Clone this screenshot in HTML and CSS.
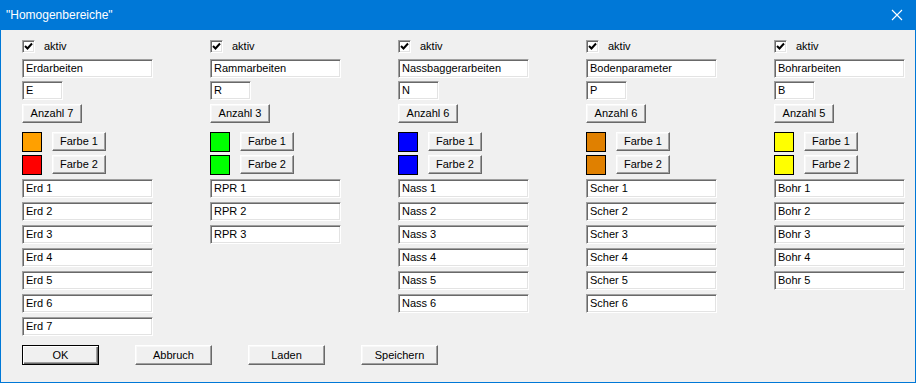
FILE: index.html
```html
<!DOCTYPE html>
<html lang="de">
<head>
    <meta charset="UTF-8">
    <title>Homogenbereiche</title>
    <link rel="stylesheet" href="styles.css">
</head>
<body>
<div class="window">
    <!-- Titelleiste -->
    <div class="titlebar">
        <span class="title">"Homogenbereiche"</span>
        <svg class="close" width="12" height="12" viewBox="0 0 12 12">
            <path d="M1 1 L11 11 M11 1 L1 11" stroke="#fff" stroke-width="1.1" fill="none"/>
        </svg>
    </div>

    <div class="content">
        <div class="columns">
            <!-- Spalte 1 -->
            <div class="col">
                <div class="check"><span class="box"><svg width="9" height="9" viewBox="0 0 9 9"><path d="M1 4 L3.5 6.5 L8 1.5" stroke="#000" stroke-width="2" fill="none"/></svg></span>aktiv</div>
                <div class="field name">Erdarbeiten</div>
                <div class="field abbr">E</div>
                <div class="btn count">Anzahl 7</div>
                <div class="color-row first"><span class="swatch" style="background:#ffa000"></span><span class="btn farbe">Farbe 1</span></div>
                <div class="color-row"><span class="swatch" style="background:#ff0000"></span><span class="btn farbe">Farbe 2</span></div>
                <div class="list">
                    <div class="field">Erd 1</div>
                    <div class="field">Erd 2</div>
                    <div class="field">Erd 3</div>
                    <div class="field">Erd 4</div>
                    <div class="field">Erd 5</div>
                    <div class="field">Erd 6</div>
                    <div class="field">Erd 7</div>
                </div>
            </div>
            <!-- Spalte 2 -->
            <div class="col">
                <div class="check"><span class="box"><svg width="9" height="9" viewBox="0 0 9 9"><path d="M1 4 L3.5 6.5 L8 1.5" stroke="#000" stroke-width="2" fill="none"/></svg></span>aktiv</div>
                <div class="field name">Rammarbeiten</div>
                <div class="field abbr">R</div>
                <div class="btn count">Anzahl 3</div>
                <div class="color-row first"><span class="swatch" style="background:#00ff00"></span><span class="btn farbe">Farbe 1</span></div>
                <div class="color-row"><span class="swatch" style="background:#00ff00"></span><span class="btn farbe">Farbe 2</span></div>
                <div class="list">
                    <div class="field">RPR 1</div>
                    <div class="field">RPR 2</div>
                    <div class="field">RPR 3</div>
                </div>
            </div>
            <!-- Spalte 3 -->
            <div class="col">
                <div class="check"><span class="box"><svg width="9" height="9" viewBox="0 0 9 9"><path d="M1 4 L3.5 6.5 L8 1.5" stroke="#000" stroke-width="2" fill="none"/></svg></span>aktiv</div>
                <div class="field name">Nassbaggerarbeiten</div>
                <div class="field abbr">N</div>
                <div class="btn count">Anzahl 6</div>
                <div class="color-row first"><span class="swatch" style="background:#0000ff"></span><span class="btn farbe">Farbe 1</span></div>
                <div class="color-row"><span class="swatch" style="background:#0000ff"></span><span class="btn farbe">Farbe 2</span></div>
                <div class="list">
                    <div class="field">Nass 1</div>
                    <div class="field">Nass 2</div>
                    <div class="field">Nass 3</div>
                    <div class="field">Nass 4</div>
                    <div class="field">Nass 5</div>
                    <div class="field">Nass 6</div>
                </div>
            </div>
            <!-- Spalte 4 -->
            <div class="col">
                <div class="check"><span class="box"><svg width="9" height="9" viewBox="0 0 9 9"><path d="M1 4 L3.5 6.5 L8 1.5" stroke="#000" stroke-width="2" fill="none"/></svg></span>aktiv</div>
                <div class="field name">Bodenparameter</div>
                <div class="field abbr">P</div>
                <div class="btn count">Anzahl 6</div>
                <div class="color-row first"><span class="swatch" style="background:#e08000"></span><span class="btn farbe">Farbe 1</span></div>
                <div class="color-row"><span class="swatch" style="background:#e08000"></span><span class="btn farbe">Farbe 2</span></div>
                <div class="list">
                    <div class="field">Scher 1</div>
                    <div class="field">Scher 2</div>
                    <div class="field">Scher 3</div>
                    <div class="field">Scher 4</div>
                    <div class="field">Scher 5</div>
                    <div class="field">Scher 6</div>
                </div>
            </div>
            <!-- Spalte 5 -->
            <div class="col">
                <div class="check"><span class="box"><svg width="9" height="9" viewBox="0 0 9 9"><path d="M1 4 L3.5 6.5 L8 1.5" stroke="#000" stroke-width="2" fill="none"/></svg></span>aktiv</div>
                <div class="field name">Bohrarbeiten</div>
                <div class="field abbr">B</div>
                <div class="btn count">Anzahl 5</div>
                <div class="color-row first"><span class="swatch" style="background:#ffff00"></span><span class="btn farbe">Farbe 1</span></div>
                <div class="color-row"><span class="swatch" style="background:#ffff00"></span><span class="btn farbe">Farbe 2</span></div>
                <div class="list">
                    <div class="field">Bohr 1</div>
                    <div class="field">Bohr 2</div>
                    <div class="field">Bohr 3</div>
                    <div class="field">Bohr 4</div>
                    <div class="field">Bohr 5</div>
                </div>
            </div>
        </div>

        <!-- Schaltflaechen unten -->
        <div class="actions">
            <div class="btn action default">OK</div>
            <div class="btn action">Abbruch</div>
            <div class="btn action">Laden</div>
            <div class="btn action">Speichern</div>
        </div>
    </div>
</div>
</body>
</html>
```

FILE: styles.css
```css
*{
    margin: 0;
    padding: 0;
    box-sizing: border-box;
}
body{
    background: #f0f0f0;
    font-family: "Liberation Sans", Arial, sans-serif;
    font-size: 11px;
    color: #000;
}
.window{
    width: 916px;
    height: 383px;
    border: 1px solid #0078d7;
    border-top: none;
    background: #f0f0f0;
}
/*Titelleiste*/
.titlebar{
    height: 30px;
    margin: 0 -1px;
    background: #0078d7;
    color: #fff;
    display: flex;
    align-items: center;
    justify-content: space-between;
    padding: 0 13px 0 6px;
}
.titlebar .title{
    font-size: 12px;
}
/*Inhalt*/
.content{
    padding: 10px 0 0 21px;
}
.columns{
    display: flex;
    gap: 57px;
    height: 296px;
}
.col{
    width: 131px;
    display: flex;
    flex-direction: column;
}
.check{
    height: 13px;
    display: flex;
    align-items: center;
    gap: 9px;
    line-height: 13px;
}
.check .box{
    width: 13px;
    height: 13px;
    background: #fff;
    border: 1px solid;
    border-color: #a0a0a0 #fff #fff #a0a0a0;
    box-shadow: inset 1px 1px #696969, inset -1px -1px #e3e3e3;
    display: flex;
    align-items: center;
    justify-content: center;
}
/*Eingabefelder*/
.field{
    height: 19px;
    background: #fff;
    border: 1px solid;
    border-color: #a0a0a0 #fff #fff #a0a0a0;
    box-shadow: inset 1px 1px #696969, inset -1px -1px #e3e3e3;
    padding: 0 2px 0 3px;
    line-height: 17px;
    white-space: nowrap;
    overflow: hidden;
}
.field.name{
    margin-top: 6px;
}
.field.abbr{
    width: 41px;
    margin-top: 3px;
}
/*Schaltflaechen*/
.btn{
    height: 19px;
    background: #f0f0f0;
    border: 1px solid;
    border-color: #fff #696969 #696969 #fff;
    box-shadow: inset -1px -1px #a0a0a0, inset 1px 1px #f8f8f8;
    text-align: center;
    line-height: 17px;
    white-space: nowrap;
}
.btn.count{
    width: 60px;
    margin-top: 4px;
}
.color-row{
    display: flex;
    gap: 10px;
    margin-top: 3px;
}
.color-row.first{
    margin-top: 9px;
}
.swatch{
    width: 20px;
    height: 20px;
    border: 1px solid #000;
}
.btn.farbe{
    width: 54px;
}
.list{
    display: flex;
    flex-direction: column;
    gap: 4px;
    margin-top: 4px;
}
.actions{
    display: flex;
    gap: 36px;
    margin-top: 9px;
}
.btn.action{
    width: 77px;
    height: 20px;
    line-height: 18px;
}
.btn.default{
    border: 1px solid #000;
    box-shadow: inset 1px 1px #fff, inset -1px -1px #696969, inset -2px -2px #a0a0a0;
}
```
